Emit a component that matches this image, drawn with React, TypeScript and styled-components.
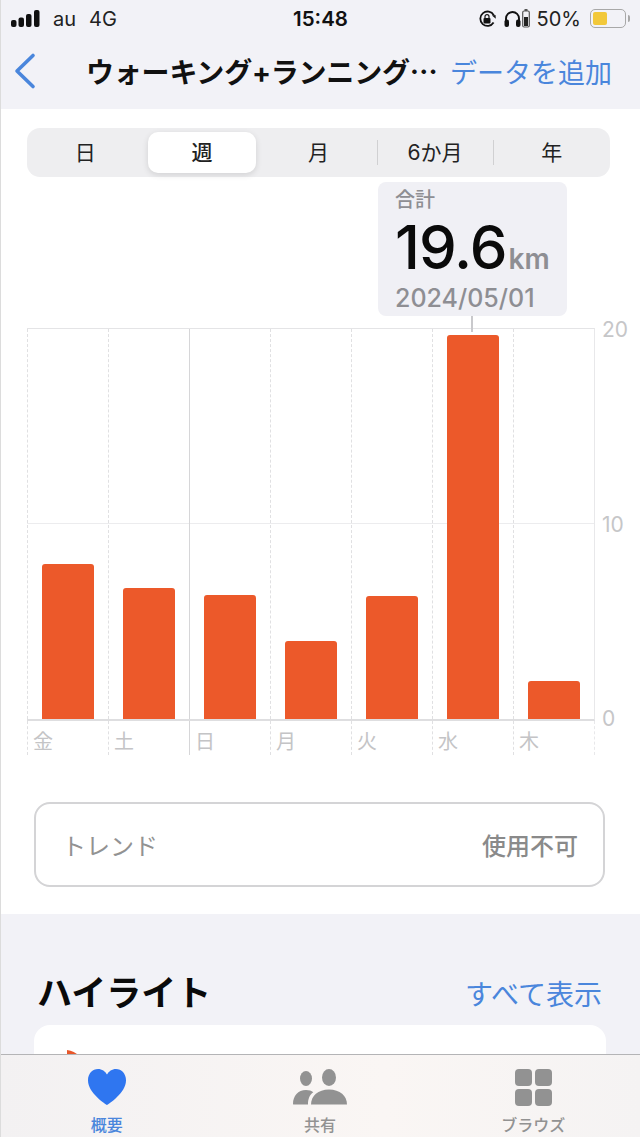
import styled, { createGlobalStyle } from 'styled-components';

const GlobalStyle = createGlobalStyle`
  html, body {
    margin: 0;
    padding: 0;
    background: #f2f2f7;
  }
  * {
    box-sizing: border-box;
  }
`;

const BLUE = '#4a86dc';
const bars = [
  { day: '金', height: 155 },
  { day: '土', height: 131 },
  { day: '日', height: 124, weekStart: true },
  { day: '月', height: 78 },
  { day: '火', height: 123 },
  { day: '水', height: 384 },
  { day: '木', height: 38 }
];
const segments = ['日', '週', '月', '6か月', '年'];

const App = () => {
  return (
    <Page>
      <GlobalStyle />
      <Header>
        <StatusBar>
          <StatusLeft>
            <svg width='29' height='18' viewBox='0 0 29 18' fill='#111'>
              <rect x='0' y='10' width='5.5' height='7' rx='2' />
              <rect x='7.5' y='7.5' width='5.5' height='9.5' rx='2' />
              <rect x='15' y='4' width='5.5' height='13' rx='2' />
              <rect x='23' y='0' width='5.5' height='17' rx='2' />
            </svg>
            <Carrier>au</Carrier>
            <Carrier>4G</Carrier>
          </StatusLeft>
          <Clock>15:48</Clock>
          <StatusRight>
            <svg width='19' height='18' viewBox='0 0 19 18' fill='none'>
              <path d='M15.6 12.6A7.2 7.2 0 1 1 15.8 5.2' stroke='#111' strokeWidth='1.8' />
              <path d='M14 5.5l3.5-.6.3 3.8z' fill='#111' />
              <rect x='5.5' y='8' width='7' height='5.4' rx='1' fill='#111' />
              <path d='M7 8V6.6a2 2 0 0 1 4 0V8' stroke='#111' strokeWidth='1.2' />
            </svg>
            <HeadsetGroup>
              <svg width='17' height='18' viewBox='0 0 17 18' fill='none'>
                <path d='M2 13V8.5a6.5 6.5 0 0 1 13 0V13' stroke='#111' strokeWidth='1.9' />
                <rect x='0.5' y='9.5' width='4.5' height='7.5' rx='2' fill='#111' />
                <rect x='12' y='9.5' width='4.5' height='7.5' rx='2' fill='#111' />
              </svg>
              <svg width='8' height='19' viewBox='0 0 8 19' fill='none'>
                <rect x='2.5' y='0' width='3' height='2' fill='#555' />
                <rect x='0.7' y='2' width='6.6' height='16' rx='1.4' stroke='#555' strokeWidth='1.2' />
                <rect x='2' y='8' width='4' height='9' fill='#222' />
              </svg>
            </HeadsetGroup>
            <Percent>50%</Percent>
            <Battery>
              <BatteryLevel $percent={45} />
            </Battery>
            <BatteryCap />
          </StatusRight>
        </StatusBar>
        <NavBar>
          <svg width='24' height='38' viewBox='0 0 24 38' fill='none'>
            <path
              d='M20 3.5 4 19l16 15.5'
              stroke={BLUE}
              strokeWidth='3.6'
              strokeLinecap='round'
              strokeLinejoin='round'
            />
          </svg>
          <NavTitle>ウォーキング+ランニング⋯</NavTitle>
          <NavAction>データを追加</NavAction>
        </NavBar>
      </Header>

      <ChartSection>
        <Segmented>
          {segments.map((label, i) => (
            <Segment key={label} $active={i === 1} $divider={i === 3 || i === 4}>
              <SegmentLabel $active={i === 1}>{label}</SegmentLabel>
            </Segment>
          ))}
        </Segmented>

        <ChartArea>
          <Callout>
            <CalloutLabel>合計</CalloutLabel>
            <CalloutValue>
              19.6<CalloutUnit>km</CalloutUnit>
            </CalloutValue>
            <CalloutDate>2024/05/01</CalloutDate>
          </Callout>
          <CalloutStem />

          <Plot>
            <MidLine />
            {bars.map((bar) => (
              <PlotColumn key={bar.day} $solid={bar.weekStart}>
                <Bar $height={bar.height} />
              </PlotColumn>
            ))}
          </Plot>
          <YAxis>
            <YLabel>20</YLabel>
            <YLabel>10</YLabel>
            <YLabel>0</YLabel>
          </YAxis>
          <DayRow>
            {bars.map((bar) => (
              <DayCell key={bar.day} $solid={bar.weekStart}>
                {bar.day}
              </DayCell>
            ))}
          </DayRow>
        </ChartArea>

        <TrendCard>
          <TrendLabel>トレンド</TrendLabel>
          <TrendValue>使用不可</TrendValue>
        </TrendCard>
      </ChartSection>

      <Highlights>
        <HighlightHead>
          <HighlightTitle>ハイライト</HighlightTitle>
          <ShowAll>すべて表示</ShowAll>
        </HighlightHead>
        <HighlightCard>
          <svg width='12' height='10' viewBox='0 0 12 10'>
            <path d='M0 10V0c5 .5 9 2.500 12 6v4z' fill='#e8572a' />
          </svg>
        </HighlightCard>
      </Highlights>

      <TabBar>
        <TabItem $active>
          <svg width='40' height='38' viewBox='0 0 40 38'>
            <path
              d='M20 37C18.6 36 1 25 1 12.2 1 5.6 5.600 1 11 1c4 0 7.300 2.300 9 5.600C21.700 3.300 25 1 29 1c5.400 0 10 4.600 10 11.200C39 25 21.400 36 20 37z'
              fill='#2f76f0'
            />
          </svg>
          <TabLabel>概要</TabLabel>
        </TabItem>
        <TabItem>
          <svg width='54' height='38' viewBox='0 0 54 38' fill='#929292'>
            <ellipse cx='13' cy='10.500' rx='6' ry='7.500' />
            <ellipse cx='36' cy='9.500' rx='7' ry='8.500' />
            <path d='M0 36c0-8 5-14 13-14 3 0 5.500.8 7.300 2.300C16.500 27 15 31 15 36.500H1.500C.6 36.500 0 36.500 0 36z' />
            <path d='M18 36.500c0-8.500 7-15 18-15s18 6.500 18 15H18z' />
          </svg>
          <TabLabel>共有</TabLabel>
        </TabItem>
        <TabItem>
          <BrowseGrid>
            <BrowseTile />
            <BrowseTile />
            <BrowseTile />
            <BrowseTile />
          </BrowseGrid>
          <TabLabel>ブラウズ</TabLabel>
        </TabItem>
      </TabBar>
    </Page>
  );
};

export default App;

const latin = `Inter, 'Noto Sans CJK JP', sans-serif`;

const Page = styled.div`
  position: relative;
  width: 640px;
  height: 1137px;
  overflow: hidden;
  background: #f2f2f7;
  font-family: ${latin};

  &::before {
    content: '';
    position: absolute;
    left: 0;
    top: 0;
    bottom: 0;
    width: 1px;
    background: #dcdcdc;
    z-index: 3;
  }
`;

const Header = styled.header`
  height: 109px;
  padding: 6px 0 0;
`;

const StatusBar = styled.div`
  display: grid;
  grid-template-columns: 1fr auto 1fr;
  align-items: center;
  height: 24px;
  padding: 0 10px 0 11px;
`;

const StatusLeft = styled.div`
  display: flex;
  align-items: center;
  gap: 13px;
`;

const Carrier = styled.span`
  font-size: 20px;
  color: #222;
`;

const Clock = styled.span`
  font-size: 20.5px;
  font-weight: 600;
  color: #111;
`;

const StatusRight = styled.div`
  display: flex;
  align-items: center;
  justify-content: flex-end;
  gap: 7px;
`;

const HeadsetGroup = styled.div`
  display: flex;
  align-items: center;
  gap: 1px;
`;

const Percent = styled.span`
  font-size: 20px;
  color: #222;
`;

const Battery = styled.div`
  width: 36px;
  height: 19px;
  padding: 2px;
  margin-left: 2px;
  border: 1.5px solid #a8a8a8;
  border-radius: 5px;
`;

const BatteryLevel = styled.div<{ $percent: number }>`
  width: ${(p) => p.$percent}%;
  height: 100%;
  background: #f2c83a;
  border-radius: 2px;
`;

const BatteryCap = styled.div`
  width: 2px;
  height: 7px;
  margin-left: -5px;
  background: #a8a8a8;
  border-radius: 0 2px 2px 0;
`;

const NavBar = styled.nav`
  display: flex;
  align-items: center;
  height: 62px;
  padding: 20px 28px 0 13px;
`;

const NavTitle = styled.h1`
  margin: 0 0 0 49px;
  flex: 1;
  font-size: 28px;
  font-weight: 700;
  color: #111;
  white-space: nowrap;
  letter-spacing: -0.2px;
`;

const NavAction = styled.span`
  font-size: 27px;
  color: ${BLUE};
  white-space: nowrap;
`;

const ChartSection = styled.section`
  height: 805px;
  padding: 19px 0 0 27px;
  background: #fff;
`;

const Segmented = styled.div`
  display: grid;
  grid-template-columns: repeat(5, 1fr);
  width: 583px;
  height: 49px;
  padding: 4px 0;
  background: #eeeef0;
  border-radius: 13px;
`;

const Segment = styled.div<{ $active?: boolean; $divider?: boolean }>`
  position: relative;
  display: flex;
  align-items: center;
  justify-content: center;
  margin: 0 4px;
  border-radius: 10px;
  background: ${(p) => (p.$active ? '#fff' : 'transparent')};
  box-shadow: ${(p) => (p.$active ? '0 2px 6px rgba(0, 0, 0, 0.12)' : 'none')};

  &::before {
    content: ${(p) => (p.$divider ? "''" : 'none')};
    position: absolute;
    left: -4px;
    top: 8px;
    bottom: 8px;
    width: 1px;
    background: #d0d0d2;
  }
`;

const SegmentLabel = styled.span<{ $active?: boolean }>`
  margin-bottom: 4px;
  font-size: 21px;
  font-weight: ${(p) => (p.$active ? 500 : 400)};
  color: #222;
`;

const ChartArea = styled.div`
  position: relative;
  display: grid;
  grid-template-columns: 568px auto;
  grid-template-rows: 393px 34px;
  margin-top: 151px;
`;

const Callout = styled.div`
  position: absolute;
  left: 351px;
  top: -146px;
  width: 189px;
  height: 134px;
  padding: 5px 17px 0;
  background: #f0f0f5;
  border-radius: 8px;
`;

const CalloutLabel = styled.div`
  font-size: 20px;
  line-height: 26px;
  color: #8e8e93;
  font-weight: 500;
`;

const CalloutValue = styled.div`
  font-size: 60px;
  line-height: 68px;
  font-weight: 500;
  letter-spacing: -1px;
  color: #0a0a0a;
  white-space: nowrap;
`;

const CalloutUnit = styled.span`
  font-size: 28px;
  line-height: 1;
  font-weight: 600;
  letter-spacing: 0;
  color: #8e8e93;
  margin-left: 2px;
`;

const CalloutDate = styled.div`
  margin-top: 2px;
  font-size: 25px;
  line-height: 30px;
  font-weight: 500;
  color: #8e8e93;
  white-space: nowrap;
`;

const CalloutStem = styled.div`
  position: absolute;
  left: 444px;
  top: -12px;
  width: 2px;
  height: 16px;
  background: #c9c9cc;
  z-index: 1;
`;

const Plot = styled.div`
  position: relative;
  display: grid;
  grid-template-columns: repeat(7, 1fr);
  border-top: 1px solid #e4e4e6;
  border-bottom: 2px solid #dedee0;
  border-right: 1px solid #e8e8ea;
`;

const MidLine = styled.div`
  position: absolute;
  left: 0;
  right: 0;
  top: 194px;
  height: 1px;
  background: #ececee;
`;

const PlotColumn = styled.div<{ $solid?: boolean }>`
  position: relative;
  display: flex;
  align-items: flex-end;
  justify-content: center;
  padding-right: 1px;
  border-left: 1px ${(p) => (p.$solid ? 'solid #d6d6d8' : 'dashed #e0e0e2')};
`;

const Bar = styled.div<{ $height: number }>`
  width: 52px;
  height: ${(p) => p.$height}px;
  background: #ec592a;
  border-radius: 3px 3px 0 0;
`;

const YAxis = styled.div`
  position: relative;
  display: flex;
  flex-direction: column;
  justify-content: space-between;
  align-items: flex-start;
  margin: -10px 0 -10px 0;
  padding-left: 7px;
`;

const YLabel = styled.span`
  font-size: 21px;
  line-height: 24px;
  color: #c6c6c8;
`;

const DayRow = styled.div`
  display: grid;
  grid-template-columns: repeat(7, 1fr);
  border-right: 1px dashed #e8e8ea;
`;

const DayCell = styled.div<{ $solid?: boolean }>`
  padding: 8px 0 0 5px;
  font-size: 20px;
  line-height: 26px;
  color: #c4c4c6;
  border-left: 1px ${(p) => (p.$solid ? 'solid #d6d6d8' : 'dashed #e0e0e2')};
`;

const TrendCard = styled.div`
  display: flex;
  align-items: center;
  justify-content: space-between;
  width: 571px;
  height: 85px;
  margin: 47px 0 0 7px;
  padding: 0 25px 0 26px;
  border: 2px solid #d4d4d6;
  border-radius: 16px;
`;

const TrendLabel = styled.span`
  font-size: 24px;
  color: #929292;
`;

const TrendValue = styled.span`
  font-size: 24px;
  font-weight: 500;
  color: #8a8a8a;
`;

const Highlights = styled.section`
  padding: 48px 33px 0 34px;
`;

const HighlightHead = styled.div`
  display: flex;
  align-items: center;
  justify-content: space-between;
  height: 56px;
  padding: 0 5px 0 3px;
`;

const HighlightTitle = styled.h2`
  margin: 0;
  font-size: 35px;
  font-weight: 700;
  color: #0a0a0a;
`;

const ShowAll = styled.span`
  margin-top: 5px;
  font-size: 28px;
  color: ${BLUE};
`;

const HighlightCard = styled.div`
  display: flex;
  align-items: flex-start;
  height: 120px;
  margin: 7px 1px 0 0;
  padding: 25px 33px;
  background: #fff;
  border-radius: 16px;
`;

const TabBar = styled.nav`
  position: absolute;
  left: 0;
  right: 0;
  bottom: 0;
  height: 83px;
  display: grid;
  grid-template-columns: 1fr 1fr 1fr;
  padding: 13px 0 0 0;
  background: linear-gradient(90deg, #f3f1f2, #faf6f4 60%, #f5f3f3);
  border-top: 1px solid #b4b4b6;
`;

const TabItem = styled.div<{ $active?: boolean }>`
  display: flex;
  flex-direction: column;
  align-items: center;
  gap: 8px;
  color: ${(p) => (p.$active ? BLUE : '#929292')};
`;

const TabLabel = styled.span`
  font-size: 16px;
  line-height: 22px;
  font-weight: 500;
`;

const BrowseGrid = styled.div`
  display: grid;
  grid-template-columns: 17px 17px;
  grid-template-rows: 17px 17px;
  gap: 3px;
  height: 38px;
  align-content: center;
`;

const BrowseTile = styled.div`
  background: #929292;
  border-radius: 4px;
`;
